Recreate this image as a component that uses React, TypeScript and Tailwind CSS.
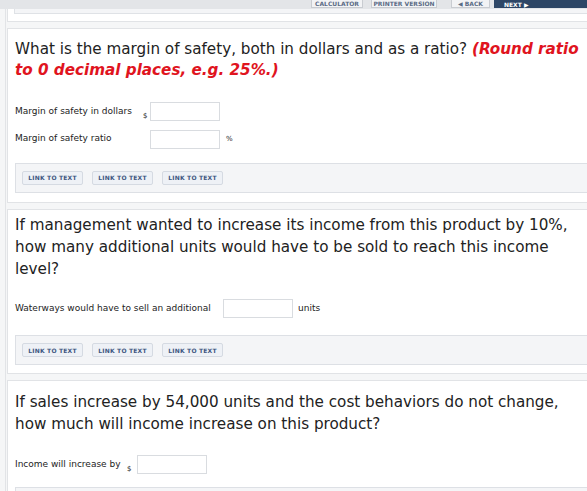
import React from "react";

const font = { fontFamily: '"DejaVu Sans", Verdana, sans-serif' };

function LinkBar() {
  return (
    <div className="mr-[-20px] flex h-[30px] items-center gap-[9px] border border-[#dde0e5] bg-[#f4f5f7] pl-[6px]">
      {["a", "b", "c"].map((k) => (
        <span
          key={k}
          className="flex h-[14px] w-[61px] items-center justify-center rounded-[2px] border border-[#d5dae2] bg-[#eef1f6] text-[6px] font-bold tracking-[0.2px] text-[#3d5580]"
        >
          LINK TO TEXT
        </span>
      ))}
    </div>
  );
}

function Input() {
  return <span className="block h-[19px] w-[70px] border border-[#d9dce0] bg-white" />;
}

const toolBtn =
  "mb-[1px] flex h-[14px] items-end justify-center whitespace-nowrap border border-[#c9ccd1] bg-[#f2f3f5] text-[6px] font-bold leading-[7px] text-[#5a6b85]";

export default function App() {
  return (
    <div className="h-[491px] w-[587px] overflow-hidden bg-[#f5f6f7] text-[#222]" style={font}>
      {/* top toolbar, mostly scrolled out */}
      <div className="flex h-[9px] items-end justify-end gap-[8px] bg-[#e3e5e8]">
        <span className={`${toolBtn} w-[52px]`}>CALCULATOR</span>
        <span className={`${toolBtn} w-[66px]`}>PRINTER VERSION</span>
        <span className={`${toolBtn} ml-[6px] w-[39px]`}>◀ BACK</span>
        <span className="mb-[1px] ml-[-4px] mr-[-6px] flex h-[14px] w-[99px] items-end whitespace-nowrap bg-[#2d4666] pl-[10px] text-[6px] font-bold leading-[7px] text-white">
          NEXT ▶
        </span>
      </div>

      <div className="ml-[5px] flex flex-col gap-[6px] border-l border-[#e2e4e7] pl-[1px]">
        {/* previous card remnant */}
        <div className="mr-[-20px] h-[13px] border border-t-0 border-[#e1e3e6] bg-white pl-[6px]">
          <div className="h-[5px] border border-t-0 border-[#dfe2e6] bg-[#f4f5f7]" />
        </div>

        {/* card 1 */}
        <div className="mr-[-20px] h-[175px] border border-[#e1e3e6] bg-white pl-[7px] pt-[10px]">
          <p className="whitespace-nowrap text-[15.2px] leading-[21px]">
            What is the margin of safety, both in dollars and as a ratio?{" "}
            <b className="italic text-[#e0141e]">(Round ratio</b>
          </p>
          <p className="text-[15.2px] font-bold italic leading-[21px] text-[#e0141e]">
            to 0 decimal places, e.g. 25%.)
          </p>
          <div className="mt-[20px] flex flex-col gap-[8px] text-[9px]">
            <div className="flex items-center">
              <span className="w-[128px] whitespace-nowrap">Margin of safety in dollars</span>
              <span className="mt-[10px] w-[7px] text-[7px]">$</span>
              <Input />
            </div>
            <div className="flex items-center">
              <span className="w-[135px] whitespace-nowrap">Margin of safety ratio</span>
              <Input />
              <span className="ml-[6px] text-[7px]">%</span>
            </div>
          </div>
          <div className="mt-[14px]">
            <LinkBar />
          </div>
        </div>

        {/* card 2 */}
        <div className="mr-[-20px] h-[165px] border border-[#e1e3e6] bg-white pl-[7px] pt-[4px]">
          <p className="pr-[20px] text-[15.2px] leading-[22px]">
            If management wanted to increase its income from this product by 10%, how many additional units would have to be sold to reach this income level?
          </p>
          <div className="mt-[19px] flex items-center text-[9px]">
            <span className="w-[208px] whitespace-nowrap">Waterways would have to sell an additional</span>
            <Input />
            <span className="ml-[5px]">units</span>
          </div>
          <div className="mt-[17px]">
            <LinkBar />
          </div>
        </div>

        {/* card 3 */}
        <div className="mr-[-20px] h-[140px] border border-[#e1e3e6] bg-white pl-[7px] pt-[10px]">
          <p className="pr-[20px] text-[15.2px] leading-[22px]">
            If sales increase by 54,000 units and the cost behaviors do not change, how much will income increase on this product?
          </p>
          <div className="mt-[19px] flex items-center text-[9px]">
            <span className="w-[112px] shrink-0 whitespace-nowrap">Income will increase by</span>
            <span className="mt-[10px] w-[10px] shrink-0 text-[7px]">$</span>
            <Input />
          </div>
          <div className="mt-[12px] h-[20px] border border-[#dde0e5] bg-[#f4f5f7]" />
        </div>
      </div>
    </div>
  );
}
